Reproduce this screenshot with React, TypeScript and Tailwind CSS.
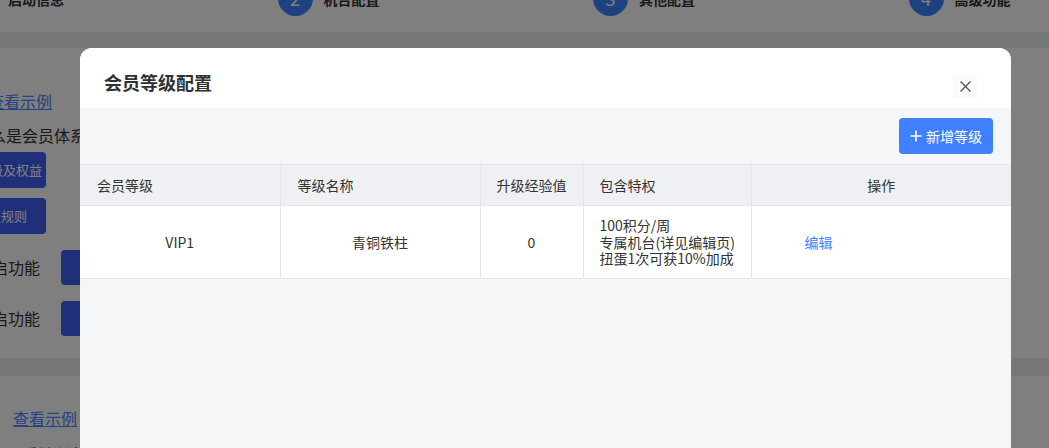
import React from 'react';

const steps = [
  { n: 1, label: '启动信息' },
  { n: 2, label: '机台配置' },
  { n: 3, label: '其他配置' },
  { n: 4, label: '高级功能' },
];

interface Level {
  level: string;
  name: string;
  exp: number;
  perks: string[];
}

const levels: Level[] = [
  { level: 'VIP1', name: '青铜铁柱', exp: 0, perks: ['100积分/周', '专属机台(详见编辑页)', '扭蛋1次可获10%加成'] },
];

const StepBar = () => (
  <div className="h-[32px] bg-white overflow-hidden">
    <div className="flex -mt-[19px] -ml-[38px]">
      {steps.map((s) => (
        <div key={s.n} className="w-[315.5px] shrink-0 flex items-center gap-[11px]">
          <div className="w-[35px] h-[35px] rounded-full bg-[#3d83ff] text-white text-[18px] flex items-center justify-center">
            {s.n}
          </div>
          <span className="text-[14px] font-bold text-[#333] mt-[2px]">{s.label}</span>
        </div>
      ))}
    </div>
  </div>
);

const BackgroundPage = () => (
  <div className="bg-[#eceef1] h-full">
    <StepBar />
    <div className="h-[16px]" />
    <div className="bg-white h-[310px] overflow-hidden text-[#333]">
      <div className="pt-[41px] -ml-[12px]">
        <a className="text-[16px] text-[#4a86ff] underline leading-[22px]">查看示例</a>
      </div>
      <div className="mt-[11px] -ml-[26px] text-[16px] leading-[22px] whitespace-nowrap">什么是会员体系</div>
      <div className="mt-[6px] flex flex-col gap-[10px]">
        <button className="w-[46px] h-[36px] rounded-r-[4px] bg-[#3e5ef4] text-white text-[13px] flex items-center justify-end pr-[4px] overflow-hidden whitespace-nowrap">
          等级及权益
        </button>
        <button className="w-[46px] h-[36px] rounded-r-[4px] bg-[#3e5ef4] text-white text-[13px] flex items-center justify-end pr-[19px] overflow-hidden whitespace-nowrap">
          升级规则
        </button>
      </div>
      <div className="mt-[15px] flex flex-col gap-[15px]">
        {[0, 1].map((i) => (
          <div key={i} className="flex items-center h-[36px] -ml-[24px]">
            <span className="text-[16px] w-[85px] whitespace-nowrap">开启功能</span>
            <div className="w-[60px] h-[35px] rounded-[4px] bg-[#3e5ef4]" />
          </div>
        ))}
      </div>
    </div>
    <div className="h-[18px]" />
    <div className="bg-white h-[80px] overflow-hidden text-[#333]">
      <div className="pt-[30px] pl-[13px]">
        <a className="text-[16px] text-[#4a86ff] underline leading-[24px]">查看示例</a>
      </div>
      <div className="mt-[12px] pl-[5px] text-[16px] whitespace-nowrap">不返首所有</div>
    </div>
  </div>
);

const PlusIcon = () => (
  <svg width="12" height="12" viewBox="0 0 12 12" fill="none" stroke="currentColor" strokeWidth="1.6">
    <path d="M6 0.5v11M0.5 6h11" />
  </svg>
);

const CloseIcon = () => (
  <svg width="11" height="11" viewBox="0 0 11 11" fill="none" stroke="currentColor" strokeWidth="1.4">
    <path d="M0.5 0.5l10 10M10.5 0.5l-10 10" />
  </svg>
);

const LevelModal = () => (
  <div className="absolute left-[80px] top-[48px] w-[931px] h-[420px] rounded-t-[12px] overflow-hidden bg-[#f5f6f8] text-[#333]">
    <div className="h-[60px] bg-white flex items-center justify-between pl-[24px] pr-[34px]">
      <h2 className="text-[18px] font-bold text-[#303133] mt-[8px]">会员等级配置</h2>
      <button className="w-[24px] h-[23px] bg-[#fafafa] flex items-center justify-center text-[#555] mt-[16px]">
        <CloseIcon />
      </button>
    </div>
    <div className="flex justify-end pt-[10px] pr-[18px] pb-[10px]">
      <button className="h-[36px] w-[94px] rounded-[4px] bg-[#3f80ff] text-white text-[14px] flex items-center justify-center gap-[4px]">
        <PlusIcon />
        新增等级
      </button>
    </div>
    <table className="w-full border-collapse text-[14px] table-fixed">
      <colgroup>
        <col className="w-[200px]" />
        <col className="w-[200px]" />
        <col className="w-[103px]" />
        <col className="w-[168px]" />
        <col />
      </colgroup>
      <thead>
        <tr className="h-[41px] bg-[#eef0f3]">
          <th className="font-normal text-left pl-[17px] border-y border-r border-[#e5e6e9]">会员等级</th>
          <th className="font-normal text-left pl-[17px] border-y border-r border-[#e5e6e9]">等级名称</th>
          <th className="font-normal text-left pl-[16px] border-y border-r border-[#e5e6e9]">升级经验值</th>
          <th className="font-normal text-left pl-[16px] border-y border-r border-[#e5e6e9]">包含特权</th>
          <th className="font-normal text-center border-y border-[#e5e6e9]">操作</th>
        </tr>
      </thead>
      <tbody>
        {levels.map((l) => (
          <tr key={l.level} className="h-[73px] bg-white">
            <td className="text-center border-b border-r border-[#e5e6e9]">{l.level}</td>
            <td className="text-center border-b border-r border-[#e5e6e9]">{l.name}</td>
            <td className="text-center border-b border-r border-[#e5e6e9]">{l.exp}</td>
            <td className="pl-[16px] border-b border-r border-[#e5e6e9] leading-[16.5px] whitespace-nowrap">
              {l.perks.map((p) => (
                <div key={p}>{p}</div>
              ))}
            </td>
            <td className="pl-[53px] border-b border-[#e5e6e9]">
              <a className="text-[#3f80ff] text-[14px]">编辑</a>
            </td>
          </tr>
        ))}
      </tbody>
    </table>
  </div>
);

export default function App() {
  return (
    <div
      className="relative w-[1049px] h-[448px] overflow-hidden"
      style={{ fontFamily: '"Noto Sans CJK SC", "Microsoft YaHei", sans-serif' }}
    >
      <BackgroundPage />
      <div className="absolute inset-0 bg-black/50" />
      <LevelModal />
    </div>
  );
}
